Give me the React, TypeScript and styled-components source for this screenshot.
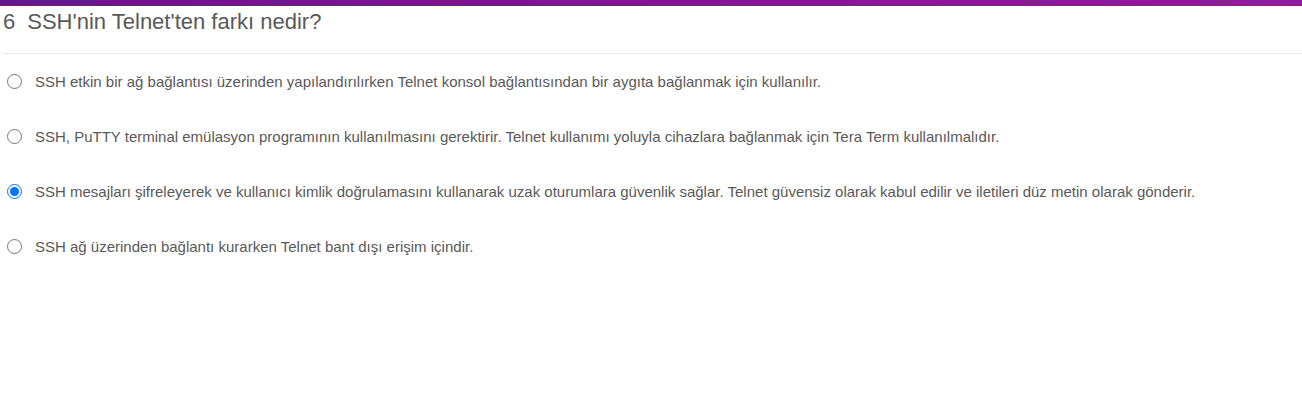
import styled, { createGlobalStyle } from "styled-components";

const GlobalStyle = createGlobalStyle`
  body {
    margin: 0;
    background: #ffffff;
    font-family: "Liberation Sans", Arial, sans-serif;
  }
`;

const Page = styled.div`
  width: 1302px;
  height: 412px;
  background: #fff;
`;

const TopBar = styled.div`
  height: 6px;
  background: linear-gradient(to right, #631a7e, #8e1f91);
`;

const Title = styled.h2`
  margin: 0;
  padding: 3px 0 0 3px;
  font-size: 22px;
  line-height: 25px;
  font-weight: normal;
  color: #595959;
  display: flex;
  gap: 12px;
`;

const Divider = styled.div`
  margin: 19px 0 0 3px;
  border-top: 1px solid #e8e8e8;
`;

const Options = styled.div`
  display: flex;
  flex-direction: column;
`;

const Option = styled.label`
  display: flex;
  align-items: center;
  height: 55px;
  padding-left: 6px;
  font-size: 15px;
  color: #595959;
  cursor: pointer;
`;

const Radio = styled.input`
  margin: 0 13px 0 1px;
  width: 15px;
  height: 15px;
  flex-shrink: 0;
`;

const options = [
  "SSH etkin bir ağ bağlantısı üzerinden yapılandırılırken Telnet konsol bağlantısından bir aygıta bağlanmak için kullanılır.",
  "SSH, PuTTY terminal emülasyon programının kullanılmasını gerektirir. Telnet kullanımı yoluyla cihazlara bağlanmak için Tera Term kullanılmalıdır.",
  "SSH mesajları şifreleyerek ve kullanıcı kimlik doğrulamasını kullanarak uzak oturumlara güvenlik sağlar. Telnet güvensiz olarak kabul edilir ve iletileri düz metin olarak gönderir.",
  "SSH ağ üzerinden bağlantı kurarken Telnet bant dışı erişim içindir.",
];

export default function App() {
  return (
    <Page>
      <GlobalStyle />
      <TopBar />
      <Title>
        <span>6</span>
        <span>SSH'nin Telnet'ten farkı nedir?</span>
      </Title>
      <Divider />
      <Options>
        {options.map((text, i) => (
          <Option key={i}>
            <Radio type="radio" name="q6" defaultChecked={i === 2} />
            {text}
          </Option>
        ))}
      </Options>
    </Page>
  );
}
